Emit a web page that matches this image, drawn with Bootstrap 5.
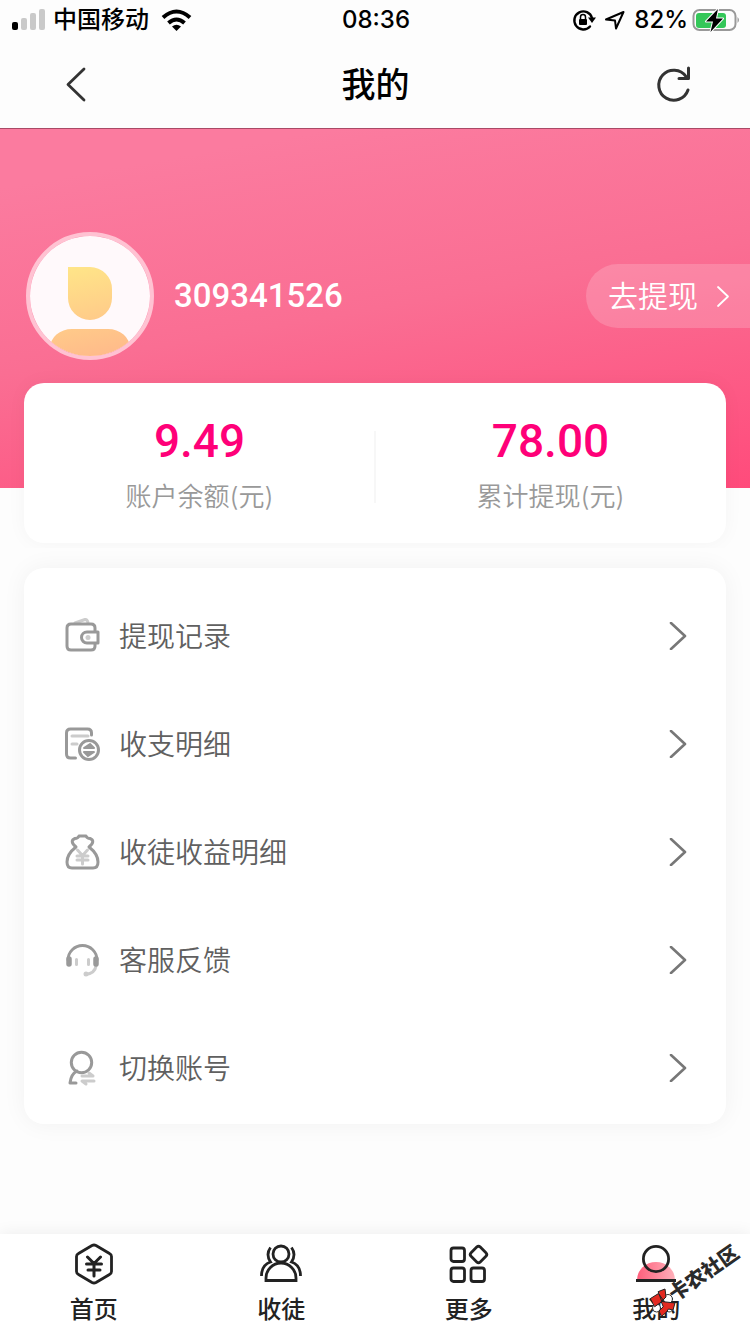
<!DOCTYPE html>
<html lang="zh-CN">
<head>
<meta charset="utf-8">
<meta name="viewport" content="width=device-width, initial-scale=1">
<title>我的</title>
<link href="https://cdn.jsdelivr.net/npm/bootstrap@5.3.0/dist/css/bootstrap.min.css" rel="stylesheet">
<style>
  body { background: #fdfdfd; color: #000; font-family: Inter, "Noto Sans CJK SC", sans-serif; }
  svg { display: block; flex: none; fill: none; stroke-linecap: round; stroke-linejoin: round; }
  a { color: inherit; text-decoration: none; }
  .status-bar { height: 40px; padding: 0 10px 0 12px; font-size: 24px; line-height: 40px; font-weight: 500; }
  .status-side { flex: 1 1 0; }
  .title-bar { height: 88px; padding: 0 55px 0 56px; }
  .title-bar h1 { padding-top: 2px; font-size: 34px; line-height: 40px; font-weight: 500; }
  .icon-btn { background: none; border: 0; padding: 0; }
  .hero { overflow: hidden; padding: 103px 0 5px; border-top: 1px solid #a94a66;
    background: linear-gradient(170deg, #fb7b9f 12%, #fa6e93 50%, #ff4b7b 100%) top / 100% 359px no-repeat; }
  .profile { padding-left: 26px; gap: 20px; color: #fff; }
  .avatar { width: 128px; height: 128px; border: 4px solid #ffc2d2; border-radius: 50%; overflow: hidden; }
  .user-id { font-family: Roboto, sans-serif; font-size: 33px; line-height: 40px; font-weight: 500; }
  .withdraw { height: 64px; padding: 0 20px 0 22px; gap: 18px; border-radius: 32px 0 0 32px; background: rgba(255,255,255,.18); font-size: 30px; font-weight: 350; }
  .balance { margin: 23px 24px 0; height: 160px; border-radius: 20px; background: #fff; box-shadow: 0 0 20px rgba(0,0,0,.04); }
  .balance-item { padding-top: 34px; }
  .balance-item + .balance-item::before { content: ""; position: absolute; left: -1px; top: 48px; height: 72px; border-left: 2px solid #f7f7f7; }
  .amount { font-family: Roboto, sans-serif; font-size: 46px; line-height: 48px; font-weight: 500; color: #ff0078; }
  .caption-text { margin-top: 14px; font-size: 26px; line-height: 36px; font-weight: 350; color: #999; }
  .menu-card { margin: 20px 24px; padding: 14px 0 2px; border-radius: 20px; background: #fff; box-shadow: 0 0 24px rgba(0,0,0,.05); }
  .menu-row { height: 108px; padding: 0 38px 0 40px; gap: 17px; font-size: 28px; font-weight: 350; color: #606060; }
  .menu-row span { padding-top: 2px; }
  .tab-bar { height: 100px; background: #fff; box-shadow: 0 0 16px rgba(0,0,0,.07); color: #222; font-size: 24px; line-height: 32px; font-weight: 500; }
  .tab-link { padding-top: 9px; gap: 9px; }
  .stamp { position: absolute; right: 4px; bottom: 18px; width: 100px; height: 76px; overflow: visible; pointer-events: none; }
  .stamp text { font: 900 20px "Noto Sans CJK SC", sans-serif; fill: #2a2a2a; }
</style>
</head>
<body>
<svg width="0" height="0" class="position-absolute" aria-hidden="true">
  <defs>
    <symbol id="go" viewBox="0 0 20 28"><path d="M3 1l14 13L3 27" stroke="#777" stroke-width="2.600"/></symbol>
  </defs>
</svg>
<div class="d-flex flex-column min-vh-100">
  <header>
    <div class="status-bar d-flex align-items-center">
      <div class="status-side d-flex align-items-center">
        <svg width="33" height="22" viewBox="0 0 33 22"><rect x="0" y="13" width="6" height="8" rx="2" fill="#000"/><path fill="#c9c9c9" d="M11 9h2q2 0 2 2v8q0 2-2 2h-2q-2 0-2-2v-8q0-2 2-2zM20 4h2q2 0 2 2v13q0 2-2 2h-2q-2 0-2-2V6q0-2 2-2zM29 0h2q2 0 2 2v17q0 2-2 2h-2q-2 0-2-2V2q0-2 2-2z"/></svg>
        <span class="mx-2">中国移动</span>
        <svg class="ms-1" width="32" height="24" viewBox="0 0 32 24"><g stroke="#000" stroke-width="4" stroke-linecap="butt"><path d="M2 9.500q13.500-12 27 0M7.500 15q8-7 16 0"/></g><path d="M11 18.500q4.500-3.500 9 0L15.500 23z" fill="#000"/></svg>
      </div>
      <span>08:36</span>
      <div class="status-side d-flex align-items-center justify-content-end">
        <svg width="24" height="22" viewBox="0 0 24 22"><path d="M18 17.500A9 9 0 1 1 20 9" stroke="#000" stroke-width="2.400"/><path d="M16 8.500h8L20 14z" fill="#000"/><rect x="7" y="10" width="8" height="6" rx="1" fill="#000"/><path d="M8.500 10V8a2.500 2.500 0 0 1 5 0v2" stroke="#000" stroke-width="1.500"/></svg>
        <svg class="mx-2" width="22" height="22" viewBox="0 0 22 22"><path d="M2 10.500L19.500 3 12 19.500 11 11.500z" stroke="#000" stroke-width="2"/></svg>
        <span class="me-1">82%</span>
        <svg width="48" height="26" viewBox="0 0 48 26"><rect x="1.500" y="3" width="42" height="20" rx="6" stroke="#999" stroke-width="2"/><rect x="4" y="6" width="30" height="15" rx="3" fill="#34c759"/><path d="M45.500 10q3 3 0 6z" fill="#999"/><path d="M26 2L14 14.500h7L18.500 25 31 11.500h-7z" fill="#000" stroke="#fff" stroke-width="2" paint-order="stroke"/></svg>
      </div>
    </div>
    <div class="title-bar d-flex align-items-center justify-content-between">
      <button class="icon-btn" type="button" aria-label="返回"><svg width="40" height="40" viewBox="0 0 40 40"><path d="M28 5L12 20.500 28 36" stroke="#333" stroke-width="2.800"/></svg></button>
      <h1 class="m-0">我的</h1>
      <button class="icon-btn" type="button" aria-label="刷新"><svg width="40" height="40" viewBox="0 0 40 40"><path d="M33 26A15 15 0 1 1 31 12.500M33.500 4v10.500H24" stroke="#333" stroke-width="3"/></svg></button>
    </div>
  </header>
  <main class="flex-grow-1">
    <section class="hero">
      <div class="profile d-flex align-items-center">
        <div class="avatar flex-shrink-0">
          <svg width="120" height="120" viewBox="0 0 120 120"><defs><linearGradient id="sun" gradientUnits="userSpaceOnUse" x1="45" y1="30" x2="65" y2="120"><stop stop-color="#ffe588"/><stop offset="1" stop-color="#ffbb8a"/></linearGradient></defs><path fill="#fff9fb" d="M0 0h120v120H0z"/><path fill="url(#sun)" d="M38 31h22a22 22 0 0 1 22 22v9a22 22 0 0 1-44 0zM20 120v-8a22 19 0 0 1 22-19h36a22 19 0 0 1 22 19v8z"/></svg>
        </div>
        <span class="user-id">309341526</span>
        <a href="#withdraw" class="withdraw ms-auto d-flex align-items-center">去提现
          <svg width="14" height="24" viewBox="0 0 14 24"><path d="M2 3l10 9.500L2 22" stroke="#fff" stroke-width="1.800"/></svg>
        </a>
      </div>
      <div class="balance row g-0 text-center">
        <div class="balance-item col-6"><div class="amount">9.49</div><div class="caption-text">账户余额(元)</div></div>
        <div class="balance-item col-6 position-relative"><div class="amount">78.00</div><div class="caption-text">累计提现(元)</div></div>
      </div>
    </section>
    <nav class="menu-card" aria-label="账户">
      <a href="#records" class="menu-row d-flex align-items-center">
        <svg width="38" height="38" viewBox="0 0 38 38"><path d="M11 6L21 2.500q2-.5 3 3" stroke="#ccc" stroke-width="3"/><path d="M31 14v-3q0-4-4-4H7Q3 7 3 11v18q0 4 4 4h20q4 0 4-4v-2" stroke="#999" stroke-width="3"/><path d="M34 15H23a5.500 5.500 0 0 0 0 11h11z" stroke="#999" stroke-width="3"/><circle cx="24" cy="20.500" r="2.500" fill="#ccc"/></svg>
        <span class="flex-grow-1">提现记录</span><svg width="20" height="28"><use href="#go"/></svg>
      </a>
      <a href="#ledger" class="menu-row d-flex align-items-center">
        <svg width="38" height="38" viewBox="0 0 38 38"><path d="M27.500 10V8q0-4-4-4h-17q-4 0-4 4v21q0 4 4 4h5" stroke="#999" stroke-width="3"/><path d="M8 11h16M8 19h5" stroke="#ccc" stroke-width="3"/><circle cx="25" cy="25" r="9.500" stroke="#999" stroke-width="3"/><path d="M20 23h10l-4-4zM30 27H20l4 4z" stroke="#999" stroke-width="2" fill="#999"/></svg>
        <span class="flex-grow-1">收支明细</span><svg width="20" height="28"><use href="#go"/></svg>
      </a>
      <a href="#income" class="menu-row d-flex align-items-center">
        <svg width="38" height="38" viewBox="0 0 38 38"><path d="M12 14Q5 8 11 5.500q3 0 4-2.500h7q1 2.500 4 2.500 6 2.500-1 8.500 9 7 9 15 0 6-5 6H8q-5 0-5-6 0-8 9-15z" stroke="#999" stroke-width="3"/><path d="M13.500 17l5 5.500 5-5.500M18.500 23v8M13 23h11M13 27h11" stroke="#ccc" stroke-width="3"/></svg>
        <span class="flex-grow-1">收徒收益明细</span><svg width="20" height="28"><use href="#go"/></svg>
      </a>
      <a href="#service" class="menu-row d-flex align-items-center">
        <svg width="38" height="38" viewBox="0 0 38 38"><path d="M32 25q-1 7-10 8.500" stroke="#ccc" stroke-width="3"/><circle cx="22" cy="33" r="2.500" fill="#ccc"/><path d="M12.500 18.500v5M24.500 18.500v5" stroke="#ccc" stroke-width="3"/><path d="M4 19a14.500 14.500 0 0 1 29 0" stroke="#999" stroke-width="2.800"/><path d="M5 18v5M32 18v5" stroke="#999" stroke-width="5.500"/></svg>
        <span class="flex-grow-1">客服反馈</span><svg width="20" height="28"><use href="#go"/></svg>
      </a>
      <a href="#switch" class="menu-row d-flex align-items-center">
        <svg width="38" height="38" viewBox="0 0 38 38"><circle cx="17.500" cy="13.500" r="10.200" stroke="#999" stroke-width="3"/><path d="M13 22q-6 3-7 12h6" stroke="#999" stroke-width="3"/><path d="M18 27h11l-4-3M30 32H18l4 3" stroke="#ccc" stroke-width="3"/></svg>
        <span class="flex-grow-1">切换账号</span><svg width="20" height="28"><use href="#go"/></svg>
      </a>
    </nav>
  </main>
  <footer class="position-relative">
    <nav class="tab-bar row g-0" aria-label="主导航">
      <a href="#home" class="tab-link col d-flex flex-column align-items-center">
        <svg width="42" height="42" viewBox="0 0 42 42"><path d="M19 2.500q2-1 4 0l13.500 8q2 1 2 3v15q0 2-2 3l-13.500 8q-2 1-4 0l-13.500-8q-2-1-2-3v-15q0-2 2-3z" stroke="#222" stroke-width="2.800"/><path d="M14.500 14l6.500 6.500L27.500 14M21 21v12M13.500 21h15M15 27h12" stroke="#222" stroke-width="3"/></svg>首页</a>
      <a href="#invite" class="tab-link col d-flex flex-column align-items-center">
        <svg width="42" height="42" viewBox="0 0 42 42"><g stroke="#222" stroke-width="2.800" stroke-linecap="butt" stroke-linejoin="miter"><circle cx="21" cy="11" r="8"/><path d="M6 37.500V35a15 15 0 0 1 30 0v2.500zM10.500 4.500q-5 7 0 14.500Q1.500 22 1.500 33M31.500 4.500q5 7 0 14.500Q40.500 22 40.500 33"/></g></svg>收徒</a>
      <a href="#more" class="tab-link col d-flex flex-column align-items-center">
        <svg width="42" height="42" viewBox="0 0 42 42"><g stroke="#222" stroke-width="2.800"><rect x="3" y="5" width="13.500" height="13.500" rx="2.500"/><rect x="3" y="25" width="13.500" height="13.500" rx="2.500"/><rect x="23" y="25" width="13.500" height="13.500" rx="2.500"/><rect x="24" y="5" width="13" height="13" rx="2.500" transform="rotate(45 30.500 11.500)"/></g></svg>更多</a>
      <a href="#me" class="tab-link col d-flex flex-column align-items-center" aria-current="page">
        <svg width="42" height="42" viewBox="0 0 42 42"><defs><linearGradient id="rose"><stop stop-color="#ff5f7c"/><stop offset="1" stop-color="#ffb0ba"/></linearGradient></defs><path d="M2 37a19 18 0 0 1 38 0z" fill="url(#rose)"/><circle cx="21" cy="16" r="12.600" stroke="#222" stroke-width="2.800"/><path d="M1 37.500h40" stroke="#222" stroke-width="3" stroke-linecap="butt"/></svg>我的</a>
    </nav>
    <svg class="stamp" viewBox="0 0 100 76"><g stroke="#333" fill="#fff"><circle cx="22" cy="59" r="4.500"/><circle cx="10.500" cy="68" r="4"/><circle cx="23" cy="68" r="4"/></g><path d="M4.500 58.500l8-5 5 7-8.500 6zM12.500 51.500l6.500-2.500 1 8-4 4zM15.500 61.500L29 63l-2 7-4.500-1-2 3-5 4.500-2.500-5.500 4-4z" fill="#e22a20" stroke="#222"/><text transform="translate(29 62) rotate(-35)">卡农社区</text></svg>
  </footer>
</div>
<script src="https://cdn.jsdelivr.net/npm/bootstrap@5.3.0/dist/js/bootstrap.bundle.min.js"></script>
</body>
</html>
